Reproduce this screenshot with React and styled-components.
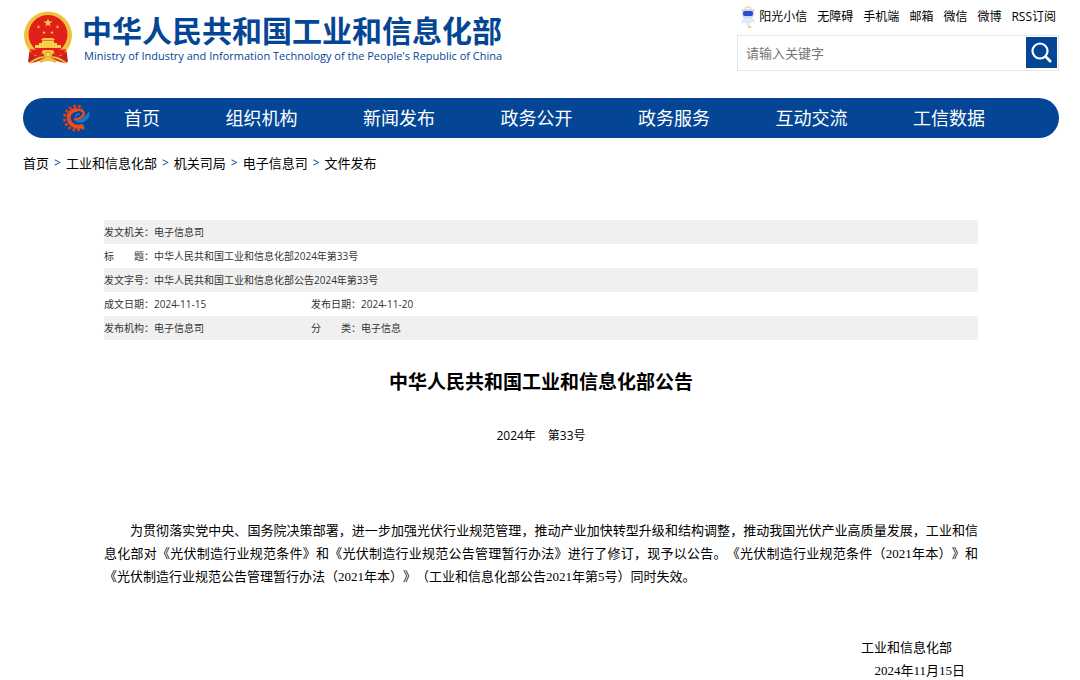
import React, { useState } from "react";
import styled, { createGlobalStyle } from "styled-components";

const topLinks = ["阳光小信", "无障碍", "手机端", "邮箱", "微信", "微博", "RSS订阅"];

const navLinks = [
  "首页",
  "组织机构",
  "新闻发布",
  "政务公开",
  "政务服务",
  "互动交流",
  "工信数据",
];

const crumbs = ["首页", "工业和信息化部", "机关司局", "电子信息司", "文件发布"];

const metaRows = [
  [["发文机关：", "电子信息司"]],
  [["标　　题：", "中华人民共和国工业和信息化部2024年第33号"]],
  [["发文字号：", "中华人民共和国工业和信息化部公告2024年第33号"]],
  [
    ["成文日期：", "2024-11-15"],
    ["发布日期：", "2024-11-20"],
  ],
  [
    ["发布机构：", "电子信息司"],
    ["分　　类：", "电子信息"],
  ],
];

const starPoints = (cx, cy, r) => {
  const points = [];
  for (let i = 0; i < 10; i++) {
    const radius = i % 2 ? r * 0.4 : r;
    const angle = (Math.PI / 5) * i - Math.PI / 2;
    points.push(
      `${(cx + radius * Math.cos(angle)).toFixed(2)},${(cy + radius * Math.sin(angle)).toFixed(2)}`
    );
  }
  return points.join(" ");
};

const Emblem = () => (
  <svg width="50" height="54" viewBox="0 0 50 54" aria-hidden="true">
    <path d="M7 36 L5 51 Q10 53 15 50 L25 46 L35 50 Q40 53 45 51 L43 36Z" fill="#c9201a" />
    <circle cx="25" cy="24.5" r="24" fill="#f5c740" />
    <circle cx="25" cy="24.5" r="22" fill="none" stroke="#e5a92c" strokeWidth="1" strokeDasharray="2 1" />
    <circle cx="25" cy="23.5" r="19.5" fill="#e2201a" />
    <polygon points={starPoints(25, 12, 4.6)} fill="#f8cf48" />
    <polygon points={starPoints(15.5, 16, 1.9)} fill="#f8cf48" />
    <polygon points={starPoints(34.5, 16, 1.9)} fill="#f8cf48" />
    <polygon points={starPoints(21, 21.5, 1.9)} fill="#f8cf48" />
    <polygon points={starPoints(29, 21.5, 1.9)} fill="#f8cf48" />
    <path d="M18 29 L20 27 H30 L32 29Z M19 29.5 H31 V32 H34 V34 H38 V37 H12 V34 H16 V32 H19Z" fill="#f8cf48" />
    <path d="M7 38 Q15 40 20 37 L25 40 L30 37 Q35 40 43 38 L41 43 Q33 46 25 44 Q17 46 9 43Z" fill="#e2201a" />
    <path d="M20 39 H30 L32 43 L28 48 H22 L18 43Z" fill="#f5c740" />
    <path d="M20 42 L12 45 L9 51 L16 50 L22 47Z M30 42 L38 45 L41 51 L34 50 L28 47Z" fill="#d9251c" />
    <path d="M21 46 Q13 47 7 52 M29 46 Q37 47 43 52 M17 51 Q25 47 33 51" fill="none" stroke="#efb834" strokeWidth="2" />
    <circle cx="25" cy="43.5" r="2.5" fill="#f8d75a" stroke="#d99a28" />
  </svg>
);

const Gear = () => (
  <svg width="28" height="28" viewBox="0 0 28 28" aria-hidden="true">
    <path d="M21 23.5 A12 12 0 1 1 20 4" fill="none" stroke="#d8401f" strokeWidth="3" strokeDasharray="2.6 2.1" />
    <path d="M20.5 21.5 Q15 24.5 9.5 21 Q4.5 17 6 11 Q8.5 5.5 14.5 6" fill="none" stroke="#ee4a1b" strokeWidth="4" />
    <path d="M9 8 Q15 4 19.5 7 Q22.5 10 18.5 13 Q15.5 15.5 11 15.5" fill="none" stroke="#ee4a1b" strokeWidth="2.4" />
    <path d="M11 16 Q18 18 26 7.5 Q28.5 13 21.5 17.5 Q15 20.5 11 16Z" fill="#1979c4" />
    <path d="M12 13 Q13 10 17 9.5" fill="none" stroke="#1979c4" strokeWidth="1.5" />
  </svg>
);

const Robot = () => (
  <svg width="14" height="22" viewBox="0 0 14 22" aria-hidden="true">
    <path d="M1 5 L2 3 M4 3 L5 1 M7 2 V0 M10 3 L9 1 M13 5 L12 3" stroke="#f6d468" strokeWidth="1.5" />
    <rect x="1" y="3" width="12" height="9" rx="4" fill="#c8d8f6" />
    <rect x="2" y="5" width="10" height="5" rx="2" fill="#2c4ad0" />
    <path d="M4 12 H10 L11 17 H9 L8 20 H6 L5 17 H3Z" fill="#dfe9fa" />
    <path d="M4 12 L1 17 M10 12 L13 16" stroke="#d3e2f9" strokeWidth="1.5" />
    <path d="M7 21 H10" stroke="#f3cf64" strokeWidth="2" />
  </svg>
);

const App = () => {
  const [keyword, setKeyword] = useState("");

  return (
    <Page>
      <GlobalStyle />
      <Header>
        <Brand href="#">
          <Emblem />
          <BrandText>
            <BrandName>中华人民共和国工业和信息化部</BrandName>
            <BrandEnglish>
              Ministry of Industry and Information Technology of the People's
              Republic of China
            </BrandEnglish>
          </BrandText>
        </Brand>
        <Tools>
          <TopLinks>
            {topLinks.map((link, i) => (
              <TopLink href="#" key={link}>
                {i === 0 && <Robot />}
                {link}
              </TopLink>
            ))}
          </TopLinks>
          <Search onSubmit={(e) => e.preventDefault()}>
            <SearchInput
              aria-label="请输入关键字"
              placeholder="请输入关键字"
              value={keyword}
              onChange={(e) => setKeyword(e.target.value)}
            />
            <SearchButton type="submit" aria-label="搜索">
              <svg width="23" height="23" viewBox="0 0 23 23" aria-hidden="true">
                <circle cx="10" cy="10" r="7.5" fill="none" stroke="#fff" strokeWidth="2.2" />
                <path d="M15 15 L21 21" stroke="#fff" strokeWidth="2.6" />
              </svg>
            </SearchButton>
          </Search>
        </Tools>
      </Header>

      <Nav>
        <Gear />
        <NavList>
          {navLinks.map((link) => (
            <NavLink href="#" key={link}>
              {link}
            </NavLink>
          ))}
        </NavList>
      </Nav>

      <Breadcrumb>
        {crumbs.map((crumb, i) => (
          <React.Fragment key={crumb}>
            {i > 0 && <Separator>&gt;</Separator>}
            <Crumb href="#">{crumb}</Crumb>
          </React.Fragment>
        ))}
      </Breadcrumb>

      <Article>
        <MetaTable>
          <colgroup>
            <LabelCol />
            <ValueCol />
            <LabelCol />
            <col />
          </colgroup>
          <tbody>
            {metaRows.map((row) => (
              <MetaRow key={row[0][0]}>
                {row.map(([label, value]) => (
                  <React.Fragment key={label}>
                    <MetaLabel scope="row">{label}</MetaLabel>
                    <MetaValue colSpan={row.length === 1 ? 3 : 1}>{value}</MetaValue>
                  </React.Fragment>
                ))}
              </MetaRow>
            ))}
          </tbody>
        </MetaTable>
        <Title>中华人民共和国工业和信息化部公告</Title>
        <Issue>2024年　第33号</Issue>
        <Paragraph>
          为贯彻落实党中央、国务院决策部署，进一步加强光伏行业规范管理，推动产业加快转型升级和结构调整，推动我国光伏产业高质量发展，工业和信息化部对《光伏制造行业规范条件》和《光伏制造行业规范公告管理暂行办法》进行了修订，现予以公告。《光伏制造行业规范条件（2021年本）》和《光伏制造行业规范公告管理暂行办法（2021年本）》（工业和信息化部公告2021年第5号）同时失效。
        </Paragraph>
        <Signature>
          <Signer>工业和信息化部</Signer>
          <SignDate>2024年11月15日</SignDate>
        </Signature>
      </Article>
    </Page>
  );
};

export default App;

const GlobalStyle = createGlobalStyle`
  * {
    box-sizing: border-box;
  }

  body {
    margin: 0;
    background: #fff;
    color: #000;
    font-family: "Open Sans", "Noto Sans CJK SC", sans-serif;
    text-spacing-trim: space-all;
  }

  a {
    color: inherit;
    text-decoration: none;
  }
`;

const Page = styled.div`
  padding: 0 21px 0 23px;
`;

const Header = styled.header`
  display: flex;
  justify-content: space-between;
  height: 98px;
`;

const Brand = styled.a`
  display: flex;
  align-items: flex-start;
  gap: 9px;
  padding-top: 11px;
  color: #044695;
`;

const BrandText = styled.span`
  display: flex;
  flex-direction: column;
  padding-top: 2px;
`;

const BrandName = styled.span`
  font-size: 30px;
  line-height: 36px;
  font-weight: 700;
  white-space: nowrap;
`;

const BrandEnglish = styled.span`
  padding-left: 2px;
  font-size: 11px;
  line-height: 14px;
  font-weight: 500;
  white-space: nowrap;
`;

const Tools = styled.div`
  width: 322px;
`;

const TopLinks = styled.div`
  display: flex;
  justify-content: flex-end;
  align-items: center;
  gap: 10px;
  height: 35px;
  padding: 0 3px 2px 0;
`;

const TopLink = styled.a`
  display: flex;
  align-items: center;
  gap: 4px;
  font-size: 12px;
  line-height: 22px;
  white-space: nowrap;
`;

const Search = styled.form`
  display: flex;
  height: 36px;
  padding: 1px;
  border: 1px solid #e6e6e6;
`;

const SearchInput = styled.input`
  flex: 1;
  min-width: 0;
  border: 0;
  outline: none;
  padding: 0 7px;
  font-family: inherit;
  font-size: 13px;

  &::placeholder {
    color: #757575;
  }
`;

const SearchButton = styled.button`
  display: flex;
  align-items: center;
  justify-content: center;
  width: 31px;
  height: 31px;
  padding: 0;
  border: 0;
  background: #044695;
  cursor: pointer;
`;

const Nav = styled.nav`
  display: flex;
  align-items: center;
  gap: 33px;
  height: 40px;
  padding: 0 74px 0 40px;
  border-radius: 20px;
  background: #044695;
`;

const NavList = styled.div`
  flex: 1;
  display: flex;
  justify-content: space-between;
`;

const NavLink = styled.a`
  color: #fff;
  font-size: 18px;
  line-height: 40px;
  white-space: nowrap;
`;

const Breadcrumb = styled.nav`
  display: flex;
  align-items: center;
  gap: 5px;
  height: 48px;
  font-size: 13px;
`;

const Crumb = styled.a`
  white-space: nowrap;
`;

const Separator = styled.span`
  color: #044695;
  font-size: 12px;
`;

const Article = styled.main`
  padding: 34px 81px 0;
`;

const MetaTable = styled.table`
  width: 100%;
  table-layout: fixed;
  border-collapse: collapse;
  font-size: 10px;
  line-height: 24px;
  color: #333;
`;

const LabelCol = styled.col`
  width: 50px;
`;

const ValueCol = styled.col`
  width: 157px;
`;

const MetaRow = styled.tr`
  &:nth-child(odd) {
    background: #f0f0f0;
  }
`;

const MetaLabel = styled.th`
  padding: 0;
  font-weight: 400;
  text-align: left;
  white-space: nowrap;
`;

const MetaValue = styled.td`
  padding: 0;
`;

const Title = styled.h1`
  margin: 27px 0 0;
  font-size: 19px;
  line-height: 30px;
  font-weight: 700;
  text-align: center;
`;

const Issue = styled.p`
  margin: 28px 0 0;
  font-size: 12px;
  line-height: 22px;
  text-align: center;
`;

const Paragraph = styled.p`
  margin: 72px 0 0;
  font-family: "Liberation Serif", "Noto Sans CJK SC", sans-serif;
  font-size: 13px;
  line-height: 23px;
  text-align: justify;
  text-indent: 2em;
`;

const Signature = styled.footer`
  display: flex;
  flex-direction: column;
  align-items: flex-end;
  margin-top: 48px;
  font-family: "Liberation Serif", "Noto Sans CJK SC", sans-serif;
  font-size: 13px;
  line-height: 23px;
`;

const Signer = styled.span`
  padding-right: 26px;
`;

const SignDate = styled.span`
  padding-right: 13px;
`;
